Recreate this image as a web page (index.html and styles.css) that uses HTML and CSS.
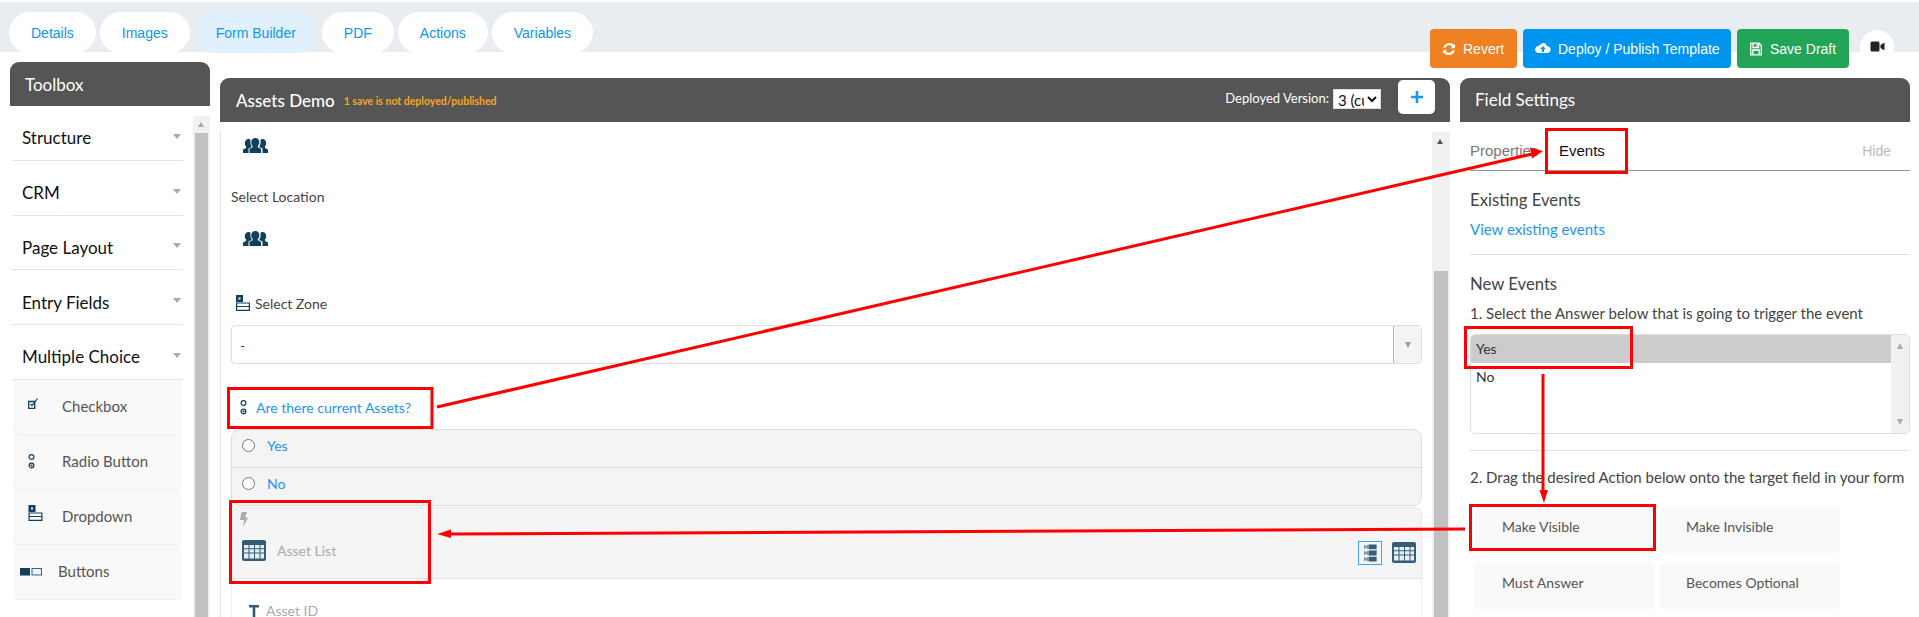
FILE: index.html
```html
<!DOCTYPE html>
<html lang="en">
<head>
<meta charset="utf-8">
<title>Form Builder</title>
<link rel="stylesheet" href="styles.css">
</head>
<body>
<svg class="defs" width="0" height="0" aria-hidden="true">
  <symbol id="i-users" viewBox="0 0 25 15">
    <path d="M12.5 0c2.500 0 3.800 1.800 3.800 4.200 0 1.600-.7 3-1.500 3.800v1.200l3.200 1.600V15H6.500v-4.200l3.200-1.600V8C8.900 7.200 8.200 5.800 8.200 4.200 8.200 1.800 10 0 12.500 0z"/>
    <path d="M5.500 1c1.100 0 1.600.3 2 .9-.4 2.300 0 4.500 1.100 6.300v.7L5.500 10.400V15H0v-3.500l3-1.500V8.300C2.200 7.500 1.800 6.500 1.800 5 1.800 2.800 3.300 1 5.500 1z"/>
    <path d="M19.500 1c-1.100 0-1.600.3-2 .9.400 2.300 0 4.500-1.100 6.300v.7l3.100 1.500V15H25v-3.500L22 10V8.300c.8-.8 1.200-1.800 1.200-3.300C23.200 2.800 21.700 1 19.500 1z"/>
  </symbol>
  <symbol id="i-drop" viewBox="0 0 14 16">
    <path d="M0 0h7v7H0z"/><path d="M.6 8h12.800v3.500H.6zM.6 11.500h12.800v3.900H.6z" fill="none" stroke="currentColor" stroke-width="1.200"/>
    <rect x="2.500" y="2.500" width="2" height="2" fill="#fff"/>
  </symbol>
  <symbol id="i-radio" viewBox="0 0 7 15">
    <circle cx="3.500" cy="3" r="2.400" fill="none" stroke="currentColor" stroke-width="1.200"/>
    <circle cx="3.500" cy="11.500" r="2.400" fill="none" stroke="currentColor" stroke-width="1.200"/>
    <circle cx="3.500" cy="11.500" r="1.100"/>
  </symbol>
  <symbol id="i-table" viewBox="0 0 24 21">
    <rect width="24" height="21" rx="2"/>
    <path fill="#e8edf1" d="M2 5h4.500v3.300H2zM7.500 5H12v3.300H7.500zM13 5h4.500v3.300H13zM18.500 5H22v3.300h-3.500zM2 9.300h4.500v3.300H2zM7.500 9.300H12v3.300H7.500zM13 9.300h4.500v3.300H13zM18.500 9.300H22v3.300h-3.500zM2 13.600h4.500v4.900H2zM7.500 13.600H12v4.900H7.500zM13 13.600h4.500v4.900H13zM18.500 13.600H22v4.900h-3.500z"/>
  </symbol>
</svg>

<header class="topbar">
  <nav class="tabs">
    <a class="tab">Details</a>
    <a class="tab">Images</a>
    <a class="tab tab-active">Form Builder</a>
    <a class="tab">PDF</a>
    <a class="tab">Actions</a>
    <a class="tab">Variables</a>
  </nav>
  <div class="actions">
    <button class="btn btn-revert">
      <svg class="btn-icon" viewBox="0 0 14 14"><path fill="#fff" d="M13 6.200H8.800l1.500-1.500A3.900 3.900 0 0 0 3.600 5.800H1.200A6.300 6.300 0 0 1 12 3l1-1zM1 7.800h4.200L3.700 9.300a3.900 3.900 0 0 0 6.700-1.100h2.400A6.300 6.300 0 0 1 2 11l-1 1z"/></svg>
      Revert
    </button>
    <button class="btn btn-deploy">
      <svg class="btn-icon btn-icon-wide" viewBox="0 0 16 14"><path fill="#fff" fill-rule="evenodd" d="M8 1a4 4 0 0 1 3.900 3.200A3.300 3.300 0 0 1 12.500 11h-9A3.500 3.500 0 0 1 2.800 4.100 3 3 0 0 1 5 3.200 4 4 0 0 1 8 1zM8 4L4.900 7.200H7V10h2V7.200h2.100z"/></svg>
      Deploy / Publish Template
    </button>
    <button class="btn btn-save">
      <svg class="btn-icon" viewBox="0 0 14 14"><path fill="none" stroke="#fff" stroke-width="1.300" d="M1.700 1.200h8.300l2.300 2.300v9.300H1.700zM4 1.500v4h5.600v-4M3.800 12.500V8h6.400v4.500"/><path fill="#fff" d="M7.300 2.300h1.300v2.200H7.300z"/></svg>
      Save Draft
    </button>
    <button class="cam" aria-label="Video">
      <svg class="cam-icon" viewBox="0 0 14 11"><path fill="#222" d="M0 2a1.500 1.500 0 0 1 1.500-1.500h6A1.500 1.500 0 0 1 9 2v7a1.500 1.500 0 0 1-1.500 1.500h-6A1.500 1.500 0 0 1 0 9zM10 4l4-2.500v8L10 7z"/></svg>
    </button>
  </div>
</header>

<main class="workspace">
  <aside class="toolbox">
    <h2 class="panel-head toolbox-head">Toolbox</h2>
    <div class="toolbox-body">
      <div class="tool-list">
        <div class="group">Structure<span class="caret"></span></div>
        <div class="group">CRM<span class="caret"></span></div>
        <div class="group">Page Layout<span class="caret"></span></div>
        <div class="group">Entry Fields<span class="caret"></span></div>
        <div class="group">Multiple Choice<span class="caret"></span></div>
        <div class="tool">
          <span class="tool-icon"><svg class="ic-check" viewBox="0 0 10 11"><path fill="none" stroke="currentColor" stroke-width="1.300" d="M.7 3.500h6v6.800h-6z"/><path fill="none" stroke="currentColor" stroke-width="1.200" d="M2.500 6l1.500 1.500L9.500 .5"/></svg></span>Checkbox
        </div>
        <div class="tool">
          <span class="tool-icon"><svg class="ic-radio"><use href="#i-radio"/></svg></span>Radio Button
        </div>
        <div class="tool">
          <span class="tool-icon"><svg class="ic-drop"><use href="#i-drop"/></svg></span>Dropdown
        </div>
        <div class="tool tool-wide">
          <span class="tool-icon"><svg class="ic-buttons" viewBox="0 0 22 8"><rect width="10" height="7.500"/><rect x="12" y=".5" width="9.500" height="6.500" fill="#eef2f5" stroke="currentColor" stroke-width=".8"/></svg></span>Buttons
        </div>
      </div>
      <div class="scroll scroll-tool"><span class="scroll-up"></span><span class="thumb thumb-tool"></span></div>
    </div>
  </aside>

  <section class="canvas">
    <div class="panel-head canvas-head">
      <h1 class="form-title">Assets Demo</h1>
      <span class="unsaved">1 save is not deployed/published</span>
      <label class="deployed">Deployed Version:</label>
      <select class="version"><option>3 (current)</option></select>
      <button class="plus" aria-label="Add"><svg viewBox="0 0 14 14" class="plus-icon"><path fill="#1e96f0" d="M5.500 0h3v5.500H14v3H8.500V14h-3V8.500H0v-3h5.500z"/></svg></button>
    </div>
    <div class="canvas-body">
      <div class="form">
        <svg class="ic-users ic-users-a"><use href="#i-users"/></svg>
        <div class="label-plain">Select Location</div>
        <svg class="ic-users ic-users-b"><use href="#i-users"/></svg>
        <div class="label-zone"><svg class="ic-zone"><use href="#i-drop"/></svg>Select Zone</div>
        <div class="select-box"><span class="select-value">-</span><span class="select-arrow"><i class="tri"></i></span></div>
        <div class="label-radio"><svg class="ic-radio-b"><use href="#i-radio"/></svg>Are there current Assets?</div>
        <div class="radio-list">
          <label class="radio-row"><input type="radio" name="a" class="radio">Yes</label>
          <label class="radio-row"><input type="radio" name="a" class="radio">No</label>
        </div>
        <div class="asset-block">
          <svg class="bolt" viewBox="0 0 8 15"><path fill="#aaa" d="M1.500 0H7L5 5.500h3L3 15l1.200-7H0z"/></svg>
          <div class="asset-row">
            <svg class="ic-table"><use href="#i-table"/></svg><span class="asset-name">Asset List</span>
            <span class="asset-tools">
              <span class="tool-btn"><svg class="ic-hhh" viewBox="0 0 15 22"><g fill="none" stroke="currentColor" stroke-width="1"><path d="M.5 1v5M3.500 1v5M.5 3.500h3M.5 8.500v5M3.500 8.500v5M.5 11h3M.5 16v5M3.500 16v5M.5 18.500h3"/></g><path d="M5 .5h10v6H5zM5 8h10v6H5zM5 15.500h10v6H5z"/></svg></span>
              <svg class="ic-table ic-table-b"><use href="#i-table"/></svg>
            </span>
          </div>
        </div>
        <div class="asset-child">
          <svg class="ic-t" viewBox="0 0 10 14"><path d="M0 0h10v2.500H6.300V14H3.700V2.500H0z"/></svg><span class="child-name">Asset ID</span>
        </div>
      </div>
      <div class="scroll scroll-canvas"><span class="scroll-up scroll-up-dark"></span><span class="thumb thumb-canvas"></span></div>
    </div>
  </section>

  <aside class="settings">
    <h2 class="panel-head settings-head">Field Settings</h2>
    <div class="settings-body">
      <div class="s-tabs">
        <a class="s-tab">Properties</a>
        <a class="s-tab s-tab-on">Events</a>
        <a class="s-hide">Hide</a>
      </div>
      <h3 class="s-title s-title-first">Existing Events</h3>
      <a class="s-link">View existing events</a>
      <hr class="s-rule s-rule-a">
      <h3 class="s-title s-title-new">New Events</h3>
      <p class="s-step s-step-a">1. Select the Answer below that is going to trigger the event</p>
      <div class="listbox">
        <div class="list-items">
          <div class="list-item list-item-on">Yes</div>
          <div class="list-item">No</div>
        </div>
        <div class="list-scroll"><i class="tri tri-up"></i><i class="tri"></i></div>
      </div>
      <hr class="s-rule s-rule-b">
      <p class="s-step s-step-b">2. Drag the desired Action below onto the target field in your form</p>
      <div class="event-grid">
        <div class="event">Make Visible</div>
        <div class="event">Make Invisible</div>
        <div class="event">Must Answer</div>
        <div class="event">Becomes Optional</div>
      </div>
    </div>
  </aside>
</main>

<svg class="annot" viewBox="0 0 1919 617" aria-hidden="true">
  <g fill="none" stroke="#f00" stroke-width="3">
    <rect x="1546.500" y="129.500" width="80" height="43"/>
    <rect x="228.500" y="388.500" width="203.500" height="39"/>
    <rect x="230.500" y="501.500" width="199" height="81"/>
    <rect x="1465.500" y="327.500" width="166" height="40"/>
    <rect x="1470.500" y="505.500" width="184" height="44"/>
    <path d="M437 407L1532 154"/>
    <path d="M1543 374V492"/>
    <path d="M1465 529L448 534"/>
  </g>
  <path fill="#f00" d="M1543 151L1530 147.500 1532 158.500zM1544 503L1539.500 490H1548zM437 534L451 529.500V538z"/>
</svg>
</body>
</html>
```

FILE: styles.css
```css
* { box-sizing: border-box; }
html, body { margin: 0; padding: 0; }
body {
  width: 1919px;
  height: 617px;
  overflow: hidden;
  background: #fff;
  position: relative;
  font-family: "Lato", "Noto Sans", sans-serif;
  color: #444;
}
.defs { position: absolute; }
h1, h2, h3, p { margin: 0; font-weight: 400; }
a { display: block; }

/* top bar */
.topbar {
  display: flex;
  justify-content: space-between;
  margin-top: 2px;
  height: 50px;
  padding: 10px 25px 0 9px;
  background: #e9ecf1;
}
.tabs { display: flex; gap: 4px; font-family: "Liberation Sans", sans-serif; }
.tab {
  height: 41px;
  padding: 0 22px;
  display: flex;
  align-items: center;
  border-radius: 21px;
  background: #fff;
  color: #0d96f0;
  font-size: 14px;
}
.tab-active { background: #e0f1fd; }
.actions { display: flex; gap: 6px; margin-top: 17px; height: 39px; }
.btn {
  border: 0;
  border-radius: 4px;
  height: 39px;
  color: #fff;
  font: 14px "Liberation Sans", sans-serif;
  display: flex;
  align-items: center;
  gap: 7px;
  padding: 0 11px 0 12px;
}
.btn-icon { width: 14px; height: 14px; }
.btn-icon-wide { width: 16px; }
.btn-revert { background: #ef8122; width: 87px; }
.btn-deploy { background: #0095f0; width: 208px; }
.btn-save { background: #22a557; width: 112px; }
.cam {
  border: 0;
  width: 34px;
  height: 38px;
  margin-left: 5px;
  margin-top: 1px;
  padding: 0;
  border-radius: 17px;
  background: #fff;
  display: flex;
  align-items: center;
  justify-content: center;
}
.cam-icon { width: 15px; height: 11px; margin-top: -6px; }

/* workspace */
.workspace { display: flex; align-items: flex-start; padding-left: 10px; height: 565px; }
.panel-head {
  height: 44px;
  background: #555;
  color: #fff;
  border-radius: 9px 9px 0 0;
}
.toolbox { width: 200px; margin-top: 10px; }
.toolbox-head { font-size: 17px; line-height: 45px; padding-left: 15px; }
.toolbox-body { display: flex; height: 511px; }
.tool-list { width: 171px; margin-left: 2px; }
.group {
  height: 54.75px;
  padding-top: 10px;
  display: flex;
  align-items: center;
  justify-content: space-between;
  padding-left: 10px;
  padding-right: 2px;
  border-bottom: 1px solid #e3e3e3;
  color: #111;
  font-size: 17px;
}
.caret {
  width: 0; height: 0;
  border-left: 4px solid transparent;
  border-right: 4px solid transparent;
  border-top: 5px solid #aaa;
  margin-top: -3px;
}
.tool {
  height: 55px;
  width: 169px;
  margin-left: 1px;
  padding: 0 0 1px 49px;
  display: flex;
  align-items: center;
  position: relative;
  background: #f9f9f9;
  border-bottom: 1px solid #eee;
  border-radius: 0 0 6px 6px;
  color: #555;
  font-size: 15px;
}
.tool-wide { padding-left: 45px; }
.tool-icon {
  position: absolute;
  left: 15px; top: 14px;
  color: #123f5c;
  display: flex;
}
.tool-wide .tool-icon { left: 7px; top: 24px; }
.ic-check { width: 10px; height: 11px; margin-top: 4px; }
.ic-radio { width: 7px; height: 15px; fill: currentColor; margin-top: 5px; }
.ic-drop { width: 15px; height: 16px; fill: currentColor; margin-top: 1px; }
.ic-buttons { width: 22px; height: 8px; fill: currentColor; margin-top: -1px; }
.scroll { background: #f1f1f1; position: relative; flex: none; }
.scroll-tool { width: 17px; margin-left: 10px; margin-top: 10px; height: 501px; }
.scroll-up {
  position: absolute; left: 5px; top: 6px;
  width: 0; height: 0;
  border-left: 3.500px solid transparent;
  border-right: 3.500px solid transparent;
  border-bottom: 5px solid #aaa;
}
.scroll-up-dark { border-bottom-color: #555; left: 5px; top: 7px; }
.thumb { position: absolute; left: 2px; right: 2px; bottom: 0; background: #c1c1c1; }
.thumb-tool { top: 17px; }
.thumb-canvas { top: 139px; }

/* canvas */
.canvas { width: 1230px; margin-left: 10px; margin-top: 26px; }
.canvas-head {
  display: flex;
  align-items: center;
  padding: 0 15px 0 16px;
}
.form-title { font-size: 17px; font-weight: 500; }
.unsaved { margin-left: 9px; font-size: 10.500px; font-weight: 700; color: #f5a623; margin-top: 2px; }
.deployed { margin-left: auto; font-size: 13px; margin-top: -4px; }
.version {
  width: 48px; height: 20px;
  margin: -3px 17px 0 4px;
  font: 15px "Lato", sans-serif;
  padding: 0;
  border: 1px solid #ddd;
  border-radius: 0;
  background: #fff;
  color: #111;
}
.plus {
  width: 37px; height: 34px;
  margin-top: -7px;
  background: #fff;
  border: 0;
  border-radius: 5px;
  padding: 0;
  display: flex; align-items: center; justify-content: center;
}
.plus-icon { width: 12px; height: 12px; }
.canvas-body { display: flex; margin-top: 10px; height: 485px; }
.form {
  width: 1212px;
  padding-left: 10px;
  border-left: 1px solid #e4e4e4;
  font-size: 14px;
  flex: none;
}
.ic-users { display: block; width: 25px; height: 15px; fill: #123f5c; margin-left: 12px; }
.ic-users-a { margin-top: 6px; }
.ic-users-b { margin-top: 24px; }
.label-plain { height: 20px; line-height: 20px; margin-top: 34px; }
.label-zone { display: flex; align-items: center; height: 16px; margin-top: 49px; }
.ic-zone { width: 14px; height: 16px; fill: #123f5c; color: #123f5c; margin: 0 5px 0 5px; }
.select-box {
  height: 39px;
  width: 1191px;
  margin-top: 14px;
  display: flex;
  border: 1px solid #ddd;
  border-radius: 4px;
}
.select-value { flex: 1; padding: 11px 0 0 8px; }
.select-arrow {
  width: 28px;
  background: #f4f4f4;
  border-left: 1px solid #bbb;
  display: flex; align-items: center; justify-content: center;
}
.tri {
  display: block;
  width: 0; height: 0;
  border-left: 3.500px solid transparent;
  border-right: 3.500px solid transparent;
  border-top: 6px solid #999;
}
.label-radio {
  display: flex; align-items: center;
  height: 15px;
  margin-top: 36px;
  color: #2196f3;
}
.ic-radio-b { width: 7px; height: 15px; margin: 0 9px 0 9px; fill: #123f5c; color: #123f5c; }
.radio-list {
  width: 1191px;
  margin-top: 14px;
  background: #f4f4f4;
  border: 1px solid #ddd;
  border-radius: 9px;
}
.radio-row {
  height: 38px;
  display: flex; align-items: center;
  color: #2196f3;
  padding: 0 0 6px 10px;
  border-bottom: 1px solid #ddd;
}
.radio-row:last-child { border-bottom: 0; height: 37px; }
.radio { margin: 0 12px 0 0; width: 13px; height: 13px; }
.asset-block {
  width: 1191px;
  height: 72px;
  margin-top: 1px;
  padding-top: 4px;
  background: #f5f5f5;
  border: 1px solid #eaeaea;
  border-bottom: 1px solid #e4e4e4;
  border-radius: 8px 8px 0 0;
}
.bolt { display: block; width: 8px; height: 15px; margin-left: 8px; }
.asset-row { display: flex; align-items: center; margin-top: 11px; padding-left: 10px; height: 24px; }
.ic-table { width: 24px; height: 21px; fill: #345d78; flex: none; }
.asset-tools { margin-left: auto; display: flex; align-items: center; gap: 10px; padding-right: 5px; margin-top: 5px; }
.asset-name { margin-left: 11px; color: #aaa; }
.tool-btn {
  width: 24px; height: 24px;
  border: 1px solid #3fa2ee;
  display: flex; align-items: center; justify-content: center;
}
.ic-hhh { width: 15px; height: 18px; fill: #345d78; color: #345d78; }
.asset-child {
  width: 1191px;
  height: 60px;
  padding: 25px 0 0 17px;
  display: flex;
  align-items: flex-start;
  gap: 7px;
  border-left: 1px solid #eee;
  border-right: 1px solid #eee;
  color: #aaa;
}
.child-name { line-height: 14px; }
.ic-t { width: 10px; height: 14px; fill: #345d78; margin-top: 1px; }
.scroll-canvas { width: 18px; height: 485px; }

/* settings */
.settings { width: 450px; margin-left: 10px; margin-top: 26px; }
.settings-head { font-size: 17px; line-height: 44px; padding-left: 15px; }
.settings-body { padding-left: 10px; }
.s-tabs {
  display: flex;
  align-items: center;
  height: 49px;
  padding-top: 8px;
  padding-right: 19px;
  border-bottom: 1px solid #999;
  font-family: "Liberation Sans", sans-serif;
  font-size: 15px;
}
.s-tab { color: #777; width: 89px; }
.s-tab-on { color: #111; width: auto; }
.s-hide { margin-left: auto; color: #bbb; margin-top: 2px; font-size: 14px; }
.s-title { font-size: 16.700px; height: 20px; line-height: 20px; color: #444; }
.s-title-first { margin-top: 19px; }
.s-link { color: #2196f3; font-size: 15px; height: 20px; line-height: 20px; margin-top: 9px; }
.s-rule { border: 0; border-top: 1px solid #e0e0e0; margin: 0; }
.s-rule-a { margin-top: 15px; }
.s-title-new { margin-top: 19px; }
.s-step { font-size: 15px; height: 20px; line-height: 20px; color: #444; white-space: nowrap; }
.s-step-a { margin-top: 9px; }
.listbox {
  display: flex;
  height: 100px;
  margin-top: 11px;
  border: 1px solid #ddd;
  border-radius: 5px;
  overflow: hidden;
  font-size: 14px;
}
.list-items { flex: 1; }
.list-item { height: 28px; line-height: 28px; padding-left: 5px; color: #333; }
.list-item-on { background: #ccc; }
.list-scroll {
  width: 18px;
  background: #f1f1f1;
  display: flex; flex-direction: column; align-items: center; justify-content: space-between;
  padding: 8px 0;
}
.tri-up { border-top: 0; border-bottom: 6px solid #aaa; }
.list-scroll .tri { border-left-width: 3.500px; border-top-color: #aaa; }
.s-rule-b { margin-top: 16px; }
.s-step-b { margin-top: 16px; }
.event-grid {
  display: grid;
  grid-template-columns: 181px 180px;
  grid-auto-rows: 46px;
  column-gap: 5px;
  row-gap: 10px;
  margin-top: 20px;
  margin-left: 4px;
}
.event {
  background: #f9f9f9;
  border-radius: 5px;
  padding: 10px 0 0 28px;
  font-size: 14px;
  color: #555;
  line-height: 20px;
}
.event:nth-child(even) { padding-left: 26px; }

.annot { position: absolute; left: 0; top: 0; width: 1919px; height: 617px; pointer-events: none; }
```
